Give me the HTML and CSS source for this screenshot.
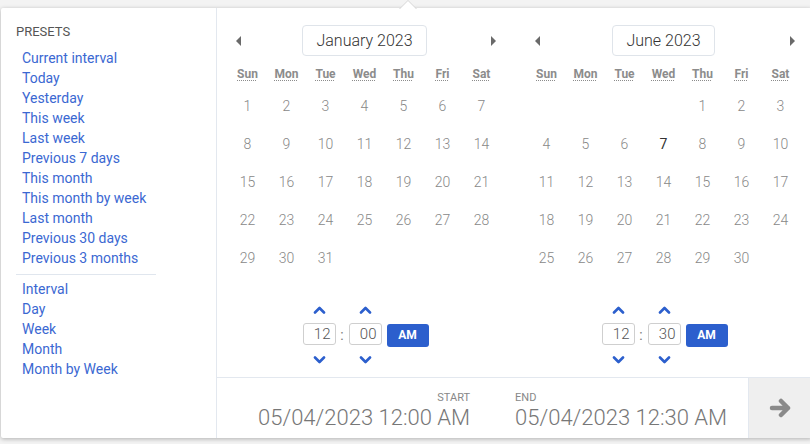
FILE: index.html
```html
<!DOCTYPE html>
<html>
<head>
<meta charset="utf-8">
<link rel="stylesheet" href="styles.css">
</head>
<body>
<div class="popup">
  <div class="presets">
    <div class="presets-title">PRESETS</div>
    <ul class="preset-list">
      <li>Current interval</li>
      <li>Today</li>
      <li>Yesterday</li>
      <li>This week</li>
      <li>Last week</li>
      <li>Previous 7 days</li>
      <li>This month</li>
      <li>This month by week</li>
      <li>Last month</li>
      <li>Previous 30 days</li>
      <li>Previous 3 months</li>
    </ul>
    <div class="sep"></div>
    <ul class="preset-list">
      <li>Interval</li>
      <li>Day</li>
      <li>Week</li>
      <li>Month</li>
      <li>Month by Week</li>
    </ul>
  </div>
  <div class="main">
    <div class="calendars">
      <div class="cal">
        <div class="cal-head">
          <span class="nav prev"></span>
          <span class="month">January 2023</span>
          <span class="nav next"></span>
        </div>
        <div class="grid weekdays">
          <abbr>Sun</abbr><abbr>Mon</abbr><abbr>Tue</abbr><abbr>Wed</abbr><abbr>Thu</abbr><abbr>Fri</abbr><abbr>Sat</abbr>
        </div>
        <div class="grid days">
          <span>1</span><span>2</span><span>3</span><span>4</span><span>5</span><span>6</span><span>7</span>
          <span>8</span><span>9</span><span>10</span><span>11</span><span>12</span><span>13</span><span>14</span>
          <span>15</span><span>16</span><span>17</span><span>18</span><span>19</span><span>20</span><span>21</span>
          <span>22</span><span>23</span><span>24</span><span>25</span><span>26</span><span>27</span><span>28</span>
          <span>29</span><span>30</span><span>31</span><span></span><span></span><span></span><span></span>
        </div>
        <div class="time">
          <div class="tcol">
            <svg class="chev up" viewBox="0 0 12 8"><path d="M1.5 6.5 L6 2 L10.5 6.5"/></svg>
            <div class="tinput">12</div>
            <svg class="chev down" viewBox="0 0 12 8"><path d="M1.5 1.5 L6 6 L10.5 1.5"/></svg>
          </div>
          <div class="colon">:</div>
          <div class="tcol">
            <svg class="chev up" viewBox="0 0 12 8"><path d="M1.5 6.5 L6 2 L10.5 6.5"/></svg>
            <div class="tinput">00</div>
            <svg class="chev down" viewBox="0 0 12 8"><path d="M1.5 1.5 L6 6 L10.5 1.5"/></svg>
          </div>
          <div class="ampm">AM</div>
        </div>
      </div>
      <div class="cal">
        <div class="cal-head">
          <span class="nav prev"></span>
          <span class="month">June 2023</span>
          <span class="nav next"></span>
        </div>
        <div class="grid weekdays">
          <abbr>Sun</abbr><abbr>Mon</abbr><abbr>Tue</abbr><abbr>Wed</abbr><abbr>Thu</abbr><abbr>Fri</abbr><abbr>Sat</abbr>
        </div>
        <div class="grid days">
          <span></span><span></span><span></span><span></span><span>1</span><span>2</span><span>3</span>
          <span>4</span><span>5</span><span>6</span><span class="today">7</span><span>8</span><span>9</span><span>10</span>
          <span>11</span><span>12</span><span>13</span><span>14</span><span>15</span><span>16</span><span>17</span>
          <span>18</span><span>19</span><span>20</span><span>21</span><span>22</span><span>23</span><span>24</span>
          <span>25</span><span>26</span><span>27</span><span>28</span><span>29</span><span>30</span><span></span>
        </div>
        <div class="time">
          <div class="tcol">
            <svg class="chev up" viewBox="0 0 12 8"><path d="M1.5 6.5 L6 2 L10.5 6.5"/></svg>
            <div class="tinput">12</div>
            <svg class="chev down" viewBox="0 0 12 8"><path d="M1.5 1.5 L6 6 L10.5 1.5"/></svg>
          </div>
          <div class="colon">:</div>
          <div class="tcol">
            <svg class="chev up" viewBox="0 0 12 8"><path d="M1.5 6.5 L6 2 L10.5 6.5"/></svg>
            <div class="tinput">30</div>
            <svg class="chev down" viewBox="0 0 12 8"><path d="M1.5 1.5 L6 6 L10.5 1.5"/></svg>
          </div>
          <div class="ampm">AM</div>
        </div>
      </div>
    </div>
    <div class="footer">
      <div class="range start">
        <div class="label">START</div>
        <div class="value">05/04/2023 12:00 AM</div>
      </div>
      <div class="range end">
        <div class="label">END</div>
        <div class="value">05/04/2023 12:30 AM</div>
      </div>
      <div class="go">
        <svg viewBox="0 0 24 20" width="24" height="20"><path d="M3 10 H19 M12 3 L19 10 L12 17"/></svg>
      </div>
    </div>
  </div>
</div>
</body>
</html>
```

FILE: styles.css
```css
* { box-sizing: border-box; }
html, body { margin: 0; padding: 0; }
body {
  background: #f3f3f3;
  font-family: Roboto, "Liberation Sans", sans-serif;
  width: 810px;
  height: 444px;
  overflow: hidden;
}
.popup {
  position: relative;
  margin: 8px 0 0 1px;
  width: 811px;
  height: 430px;
  background: #fff;
  display: flex;
  box-shadow: 0 1px 4px rgba(0,0,0,0.28);
  border-radius: 2px;
}
.popup::before {
  content: "";
  position: absolute;
  top: -8px;
  left: 398px;
  width: 0; height: 0;
  border-left: 9px solid transparent;
  border-right: 9px solid transparent;
  border-bottom: 9px solid #d6d6d6;
}
.popup::after {
  content: "";
  position: absolute;
  top: -7px;
  left: 399px;
  width: 0; height: 0;
  border-left: 8px solid transparent;
  border-right: 8px solid transparent;
  border-bottom: 8px solid #fff;
}
.presets {
  width: 216px;
  border-right: 1px solid #e3e8ef;
  padding: 16px 0 0 15px;
}
.presets-title {
  font-size: 13px;
  line-height: 16px;
  color: #555;
  margin-bottom: 8px;
}
.preset-list {
  list-style: none;
  margin: 0;
  padding: 0 0 0 6px;
}
.preset-list li {
  font-size: 14px;
  line-height: 20px;
  color: #3b68d2;
}
.sep {
  width: 140px;
  height: 1px;
  background: #e0e6ee;
  margin: 6px 0 4px;
}
.main {
  flex: 1;
  display: flex;
  flex-direction: column;
}
.calendars {
  flex: 1;
  display: flex;
  gap: 26px;
  padding: 17px 11px 0;
}
.cal { width: 273px; }
.cal-head {
  height: 31px;
  display: grid;
  grid-template-columns: 1fr auto 1fr;
  align-items: center;
}
.nav {
  width: 0; height: 0;
  border-top: 5px solid transparent;
  border-bottom: 5px solid transparent;
}
.prev {
  justify-self: start;
  margin-left: 8px;
  border-right: 5px solid #6a6a6a;
}
.next {
  justify-self: end;
  margin-right: 5px;
  border-left: 5px solid #6a6a6a;
}
.month {
  height: 31px;
  line-height: 29px;
  padding: 0 13px;
  border: 1px solid #dfe4ea;
  border-radius: 4px;
  font-size: 16px;
  font-weight: 300;
  color: #333;
}
.grid {
  display: grid;
  grid-template-columns: repeat(7, 39px);
}
.weekdays {
  margin-top: 8px;
  height: 20px;
}
.weekdays abbr {
  text-align: center;
  font-size: 12px;
  line-height: 20px;
  font-weight: 700;
  color: #8c8c8c;
  text-decoration: underline dotted;
  text-underline-offset: 2px;
  text-decoration-thickness: 1px;
}
.days { margin-top: 3px; }
.days span {
  height: 38px;
  display: flex;
  align-items: center;
  justify-content: center;
  font-size: 14px;
  font-weight: 300;
  color: #888;
}
.days span.today { color: #333; font-weight: 400; }
.time {
  margin-top: 29px;
  display: flex;
  justify-content: center;
  align-items: center;
  padding-left: 2px;
}
.tcol {
  display: flex;
  flex-direction: column;
  align-items: center;
}
.chev {
  width: 13px;
  height: 8px;
  fill: none;
  stroke: #2c5fcd;
  stroke-width: 2.6;
  stroke-linecap: round;
  stroke-linejoin: round;
}
.chev.up { margin-bottom: 9px; }
.chev.down { margin-top: 11px; }
.tinput {
  width: 33px;
  height: 22px;
  border: 1px solid #cfcfcf;
  border-radius: 3px;
  text-align: right;
  padding-right: 4px;
  font-size: 15px;
  font-weight: 300;
  line-height: 20px;
  color: #555;
}
.colon {
  width: 13px;
  text-align: center;
  font-size: 14px;
  color: #777;
}
.ampm {
  margin-left: 5px;
  width: 42px;
  height: 23px;
  background: #2c5fcd;
  border-radius: 3px;
  color: #fff;
  font-size: 12px;
  font-weight: 700;
  line-height: 23px;
  text-align: center;
}
.footer {
  height: 61px;
  border-top: 1px solid #e3e8ef;
  display: flex;
  padding-left: 41px;
}
.range { padding-top: 13px; }
.start { text-align: right; }
.end { margin-left: 45px; }
.label {
  font-size: 11px;
  line-height: 14px;
  color: #888;
}
.value {
  font-size: 22px;
  font-weight: 300;
  line-height: 26px;
  color: #777;
}
.go {
  margin-left: auto;
  width: 64px;
  background: #efefef;
  border-left: 1px solid #e3e8ef;
  display: flex;
  align-items: center;
  justify-content: center;
}
.go svg {
  fill: none;
  stroke: #8a8a8a;
  stroke-width: 4.5;
  stroke-linecap: round;
  stroke-linejoin: round;
}
```
